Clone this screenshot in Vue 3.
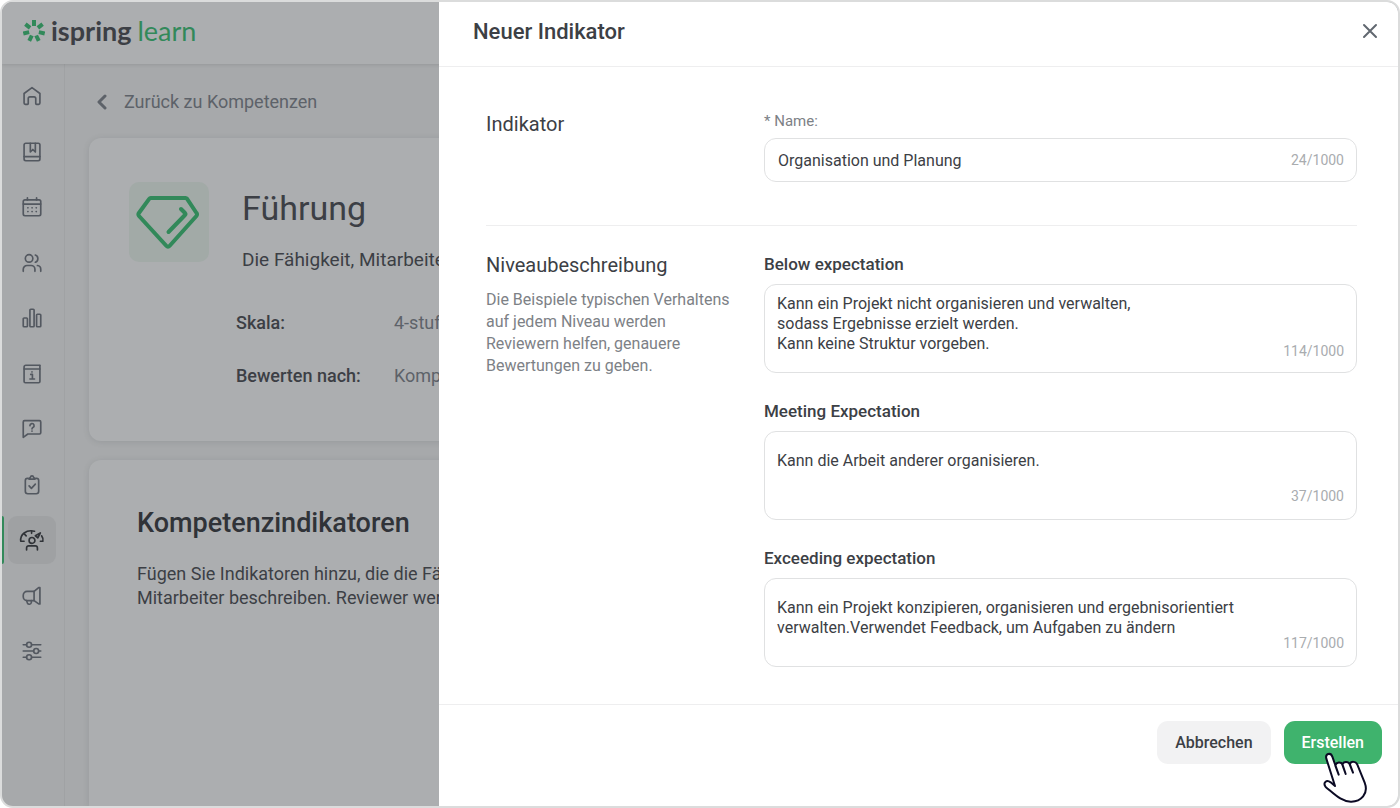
<script setup>
import { reactive } from 'vue'

const navItems = [
  { id: 'home', label: 'Startseite', shapes: ['M2.5 9 12 2l9.500 7V20.500a1.500 1.500 0 0 1-1.500 1.500h-2.500a1 1 0 0 1-1-1V15a2 2 0 0 0-2-2h-5a2 2 0 0 0-2 2v6a1 1 0 0 1-1 1H4a1.500 1.500 0 0 1-1.500-1.500z'] },
  { id: 'courses', label: 'Kurse', shapes: ['M4.500 1.500h15a2 2 0 0 1 2 2v17a2 2 0 0 1-2 2h-15a2 2 0 0 1-2-2v-17a2 2 0 0 1 2-2z', 'M2.500 17.500h19', 'M10 1.500V12l3-3 3 3V1.500'] },
  { id: 'calendar', label: 'Kalender', shapes: ['M3.500 3.500h17a2 2 0 0 1 2 2v15a2 2 0 0 1-2 2h-17a2 2 0 0 1-2-2v-15a2 2 0 0 1 2-2z', 'M1.500 8.500h21', 'M6.500 1v2.500M17.500 1v2.500', 'M7 13h.2M12 13h.2M17 13h.2M7 17.500h.2M12 17.500h.2M17 17.500h.2'] },
  { id: 'users', label: 'Benutzer', shapes: ['M13 6.500a4.500 4.500 0 1 1-9 0 4.500 4.500 0 0 1 9 0z', 'M1.500 22v-2.500A4.500 4.500 0 0 1 6 15h5a4.500 4.500 0 0 1 4.500 4.500V22', 'M16 2.500a4.500 4.500 0 0 1 0 8.500', 'M18.500 15a4.500 4.500 0 0 1 4 4.500V22'] },
  { id: 'reports', label: 'Berichte', shapes: ['M2.500 12h3a1 1 0 0 1 1 1v8.500a1 1 0 0 1-1 1h-3a1 1 0 0 1-1-1V13a1 1 0 0 1 1-1z', 'M10.500 1.500h3a1 1 0 0 1 1 1v19a1 1 0 0 1-1 1h-3a1 1 0 0 1-1-1v-19a1 1 0 0 1 1-1z', 'M18.500 7.500h3a1 1 0 0 1 1 1v13a1 1 0 0 1-1 1h-3a1 1 0 0 1-1-1v-13a1 1 0 0 1 1-1z'] },
  { id: 'info', label: 'Infoportal', shapes: ['M21.500 6v15a1.500 1.500 0 0 1-1.500 1.500H4A1.500 1.500 0 0 1 2.500 21V3.500a2 2 0 0 1 2-2h17', 'M2.500 6h19V2', 'M10.500 12.500h2V18M9.500 18H15M12 9.500v.2'] },
  { id: 'questions', label: 'Fragen', shapes: ['M3 2h18a1.500 1.500 0 0 1 1.500 1.500v13A1.500 1.500 0 0 1 21 18H7l-5.500 4V3.500A1.500 1.500 0 0 1 3 2z', 'M9.500 8a2.500 2.500 0 1 1 3.600 2.200c-.8.500-1.100.9-1.100 1.800M12 14.500v.2'] },
  { id: 'tasks', label: 'Aufgaben', shapes: ['M7.500 4H6.500A2.500 2.500 0 0 0 4 6.500v13A3 3 0 0 0 7 22.500h10a3 3 0 0 0 3-3v-13A2.500 2.500 0 0 0 17.500 4h-1', 'M8.500 5c0-1.500 1-1.500 1.500-2 .5-2.500 3.500-2.500 4 0 .5.500 1.500.5 1.500 2z', 'M8.500 13l2.800 3 4.700-5'] },
  { id: 'skills', label: 'Kompetenzen', active: true, shapes: ['M0 13.500h2.500M-1.500 13.500C-2.500 5.500 5-1 15 1.500M23.500 7c1.500 2 2 4.500 1.500 6.500H22', 'M3 5l2 2M11.500 1v3', 'M16 7l6-3.500L19 9.500z', 'M15.500 12.500a3.500 3.500 0 1 1-7 0 3.500 3.500 0 0 1 7 0z', 'M5.500 24v-2.500a2.500 2.500 0 0 1 2.500-2.500h8a2.500 2.500 0 0 1 2.500 2.500V24'] },
  { id: 'news', label: 'Neuigkeiten', shapes: ['M6 6.500h8.500v11H6a4.500 4.500 0 0 1-4.500-4.500v-2A4.500 4.500 0 0 1 6 6.500z', 'M14.500 6.500l5.500-4.500h1.500v19.500H20l-5.500-4', 'M5.500 17.500l1 3a2.500 2.500 0 0 0 4.700-.5v-2.500'] },
  { id: 'settings', label: 'Einstellungen', shapes: ['M1.500 4.500h4M11.500 4.500h11M1.500 12h12.500M20 12h2.500M1.500 19.500h4M11.500 19.500h11', 'M11.500 4.500a3 3 0 1 1-6 0 3 3 0 0 1 6 0z', 'M20 12a3 3 0 1 1-6 0 3 3 0 0 1 6 0z', 'M11.500 19.500a3 3 0 1 1-6 0 3 3 0 0 1 6 0z'] }
]

const rays = Array.from({ length: 7 }, (_, i) => (i * 360) / 7)

const form = reactive({ name: 'Organisation und Planung' })

const levels = reactive([
  { id: 'below', title: 'Below expectation', count: '114/1000', roomy: false, text: 'Kann ein Projekt nicht organisieren und verwalten,\nsodass Ergebnisse erzielt werden.\nKann keine Struktur vorgeben.' },
  { id: 'meeting', title: 'Meeting Expectation', count: '37/1000', roomy: true, text: 'Kann die Arbeit anderer organisieren.' },
  { id: 'exceeding', title: 'Exceeding expectation', count: '117/1000', roomy: true, text: 'Kann ein Projekt konzipieren, organisieren und ergebnisorientiert\nverwalten.Verwendet Feedback, um Aufgaben zu ändern' }
])
</script>

<template>
  <div class="window">
    <header class="topbar">
      <a class="logo" href="#">
        <svg class="logo-mark" viewBox="0 0 22 22" aria-hidden="true">
          <rect v-for="r in rays" :key="r" x="9" y="0" width="4" height="6" :transform="`rotate(${r} 11 11)`" />
        </svg>
        <span class="logo-name">ispring</span>
        <span class="logo-product">learn</span>
      </a>
    </header>

    <div class="workspace">
      <nav class="sidebar">
        <a v-for="item in navItems" :key="item.id" href="#" class="nav-item" :class="{ active: item.active }" :aria-label="item.label">
          <svg viewBox="0 0 24 24" aria-hidden="true">
            <path v-for="shape in item.shapes" :key="shape" :d="shape" />
          </svg>
        </a>
      </nav>

      <main class="content">
        <a class="back" href="#">
          <svg viewBox="0 0 12 16" aria-hidden="true"><path d="M9 2 3 8l6 6" /></svg>
          Zurück zu Kompetenzen
        </a>

        <section class="card summary">
          <div class="badge">
            <svg viewBox="0 0 80 80" aria-hidden="true">
              <path d="M22 16h34.500a2 2 0 0 1 1.600.8L67.500 31a2.500 2.500 0 0 1-.1 3L40.500 64a2 2 0 0 1-3 0L10 34a2.500 2.500 0 0 1-.1-3l10.300-14.200a2 2 0 0 1 1.800-.8z" />
              <path d="M52 27l4 4a1.500 1.500 0 0 1 0 2L39.500 50" />
            </svg>
          </div>
          <div class="summary-text">
            <h1>Führung</h1>
            <p>Die Fähigkeit, Mitarbeite</p>
            <dl>
              <dt>Skala:</dt>
              <dd>4-stuf</dd>
              <dt>Bewerten nach:</dt>
              <dd>Komp</dd>
            </dl>
          </div>
        </section>

        <section class="card indicators">
          <h2>Kompetenzindikatoren</h2>
          <p>Fügen Sie Indikatoren hinzu, die die Fä<br>Mitarbeiter beschreiben. Reviewer wer</p>
        </section>
      </main>
    </div>

    <form class="drawer" role="dialog" aria-labelledby="drawer-title" @submit.prevent>
      <header class="drawer-head">
        <h2 id="drawer-title">Neuer Indikator</h2>
        <button type="button" class="close" aria-label="Schließen">
          <svg viewBox="0 0 16 16" aria-hidden="true"><path d="M2 2l12 12M14 2 2 14" /></svg>
        </button>
      </header>

      <div class="drawer-body">
        <section class="group first">
          <div class="group-info"><h3>Indikator</h3></div>
          <div class="group-fields">
            <label class="name-label" for="indicator-name">* Name:</label>
            <div class="control">
              <input id="indicator-name" v-model="form.name" type="text">
              <span class="count">24/1000</span>
            </div>
          </div>
        </section>

        <section class="group">
          <div class="group-info">
            <h3>Niveaubeschreibung</h3>
            <p>Die Beispiele typischen Verhaltens auf jedem Niveau werden Reviewern helfen, genauere Bewertungen zu geben.</p>
          </div>
          <div class="group-fields levels">
            <div v-for="level in levels" :key="level.id" class="level" :class="{ roomy: level.roomy }">
              <label :for="level.id">{{ level.title }}</label>
              <div class="control">
                <textarea :id="level.id" v-model="level.text"></textarea>
                <span class="count low">{{ level.count }}</span>
              </div>
            </div>
          </div>
        </section>
      </div>

      <footer class="drawer-foot">
        <button type="button" class="btn">Abbrechen</button>
        <button type="submit" class="btn primary">
          Erstellen
          <svg class="pointer" viewBox="0 0 168 174" aria-hidden="true">
            <path d="M57 114 31 32C27 17 44 12 49 26L68 80 58 53C60 42 76 40 80 51L89 78 79 50C82 40 97 38 102 50L111 74 101 49C105 39 119 39 124 50L146 104C159 138 134 160 106 161 78 162 57 140 29 117 20 105 31 93 44 103Z" />
          </svg>
        </button>
      </footer>
    </form>
  </div>
</template>

<style>
body {
  margin: 0;
  background: #fff;
}
</style>

<style scoped>
* {
  box-sizing: border-box;
}

.window {
  position: relative;
  display: flex;
  flex-direction: column;
  height: 100vh;
  overflow: hidden;
  border: 2px solid #dbdcdc;
  border-radius: 13px;
  background: #a7a9ab;
  color: #3c3f45;
  font-family: Roboto, "Liberation Sans", sans-serif;
  font-size: 16px;
}

h1, h2, h3, p, dl, dd {
  margin: 0;
}

a {
  color: inherit;
  text-decoration: none;
}

button, input, textarea {
  font: inherit;
  color: inherit;
}

svg {
  display: block;
  fill: none;
  stroke: currentColor;
  stroke-linecap: round;
  stroke-linejoin: round;
}

.topbar {
  position: relative;
  display: flex;
  flex: none;
  align-items: center;
  height: 62px;
  padding: 0 21px 4px;
  background: #acaeb0;
  box-shadow: 0 1px 3px rgba(60, 64, 70, 0.16);
}

.logo {
  display: flex;
  align-items: center;
  font-family: Lato, sans-serif;
  font-size: 27px;
  line-height: 32px;
}

.logo-mark {
  width: 22px;
  height: 22px;
  margin-right: 6px;
  fill: #32895a;
  stroke: none;
}

.logo-name {
  margin-right: 6px;
  font-weight: 700;
}

.logo-product {
  color: #32895a;
}

.workspace {
  display: flex;
  flex: 1;
  min-height: 0;
}

.sidebar {
  display: flex;
  flex: none;
  flex-direction: column;
  justify-content: space-between;
  width: 63px;
  padding: 8px 0 131px;
  border-right: 1px solid #a0a2a4;
  color: #535860;
}

.nav-item {
  display: grid;
  place-items: center;
  flex: none;
  width: 48px;
  height: 48px;
  margin-left: 6px;
  border-radius: 9px;
}

.nav-item svg {
  width: 20px;
  height: 20px;
  stroke-width: 2;
  overflow: visible;
}

.nav-item.active {
  position: relative;
  background: #9fa1a3;
  color: #303338;
}

.nav-item.active::before {
  position: absolute;
  top: 0;
  left: -6px;
  width: 2px;
  height: 100%;
  border-radius: 0 2px 2px 0;
  background: #32895a;
  content: "";
}

.content {
  display: flex;
  flex: 1;
  flex-direction: column;
  min-width: 0;
  padding: 24px 24px 0;
}

.back {
  display: flex;
  align-items: center;
  gap: 16px;
  margin-left: 7px;
  color: #5d6269;
  font-size: 18px;
  line-height: 28px;
}

.back svg {
  width: 12px;
  height: 16px;
  stroke-width: 3;
}

.card {
  border-radius: 12px;
  background: #acaeb0;
  box-shadow: 0 1px 6px rgba(60, 64, 70, 0.14);
}

.summary {
  display: flex;
  gap: 33px;
  height: 303px;
  margin-top: 22px;
  padding: 44px 40px;
}

.badge {
  flex: none;
  width: 80px;
  height: 80px;
  border-radius: 10px;
  background: #a2aaa7;
  color: #32895a;
}

.badge svg {
  stroke-width: 4;
}

h1 {
  font-size: 34px;
  font-weight: 400;
  line-height: 52px;
}

.summary-text > p {
  margin-top: 14px;
  font-size: 19px;
  line-height: 24px;
  white-space: nowrap;
}

dl {
  display: grid;
  grid-template-columns: 152px 1fr;
  gap: 29px 6px;
  margin: 39px 0 0 -6px;
  font-size: 18px;
  line-height: 24px;
}

dt {
  font-weight: 500;
}

dd {
  color: #5d6269;
}

.indicators {
  flex: 1;
  margin-top: 19px;
  padding: 45px 48px;
  border-radius: 12px 12px 0 0;
  font-size: 18px;
}

.indicators h2 {
  color: #303338;
  font-size: 27px;
  font-weight: 500;
  line-height: 36px;
}

.indicators p {
  margin-top: 21px;
  line-height: 24px;
}

.drawer {
  position: absolute;
  inset: 0 0 0 437px;
  display: flex;
  flex-direction: column;
  background: #fff;
  color: #3c4045;
}

.drawer-head {
  display: flex;
  flex: none;
  align-items: center;
  justify-content: space-between;
  height: 65px;
  padding: 0 20px 6px 34px;
  border-bottom: 1px solid #eeeeef;
}

.drawer-head h2 {
  font-size: 22px;
  font-weight: 500;
}

.close {
  padding: 0;
  border: 0;
  background: none;
  color: #616870;
}

.close svg {
  width: 16px;
  height: 16px;
  stroke-width: 2;
}

.drawer-body {
  flex: 1;
  min-height: 0;
  padding: 44px 41px 0 47px;
}

.group {
  display: grid;
  grid-template-columns: 248px 1fr;
  gap: 30px;
}

.first {
  margin-bottom: 26px;
  padding-bottom: 43px;
  border-bottom: 1px solid #eeeeef;
}

h3 {
  font-size: 20px;
  font-weight: 400;
  line-height: 26px;
}

.group-info p {
  margin-top: 11px;
  color: #7d8186;
  line-height: 22px;
}

.name-label {
  display: block;
  margin-bottom: 7px;
  color: #7d8186;
  font-size: 15px;
  line-height: 20px;
}

.control {
  position: relative;
}

input, textarea {
  display: block;
  width: 100%;
  border: 1px solid #e0e1e2;
  border-radius: 12px;
  outline: none;
  background: #fff;
}

input {
  height: 44px;
  padding: 0 96px 0 13px;
}

textarea {
  height: 89px;
  padding: 9px 12px 0;
  line-height: 20px;
  resize: none;
  overflow: hidden;
}

.count {
  position: absolute;
  top: 12px;
  right: 13px;
  color: #a9acaf;
  font-size: 14px;
  line-height: 20px;
}

.count.low {
  top: auto;
  bottom: 12px;
}

.roomy textarea {
  padding-top: 19px;
}

.roomy .count {
  bottom: 14px;
}

.levels {
  display: flex;
  flex-direction: column;
  gap: 26px;
}

.level label {
  display: block;
  margin-bottom: 8px;
  font-size: 17px;
  font-weight: 500;
  line-height: 24px;
}

.drawer-foot {
  display: flex;
  flex: none;
  justify-content: flex-end;
  gap: 13px;
  height: 102px;
  padding: 16px;
  border-top: 1px solid #eeeeef;
}

.btn {
  position: relative;
  height: 43px;
  padding: 0 18px;
  border: 0;
  border-radius: 11px;
  background: #f2f2f3;
  font-weight: 500;
}

.primary {
  background: #3fb36d;
  color: #fff;
}

.pointer {
  position: absolute;
  top: 27px;
  left: 32px;
  width: 56px;
  height: 58px;
  fill: #fff;
  stroke: #0b0a24;
  stroke-width: 6;
}
</style>
